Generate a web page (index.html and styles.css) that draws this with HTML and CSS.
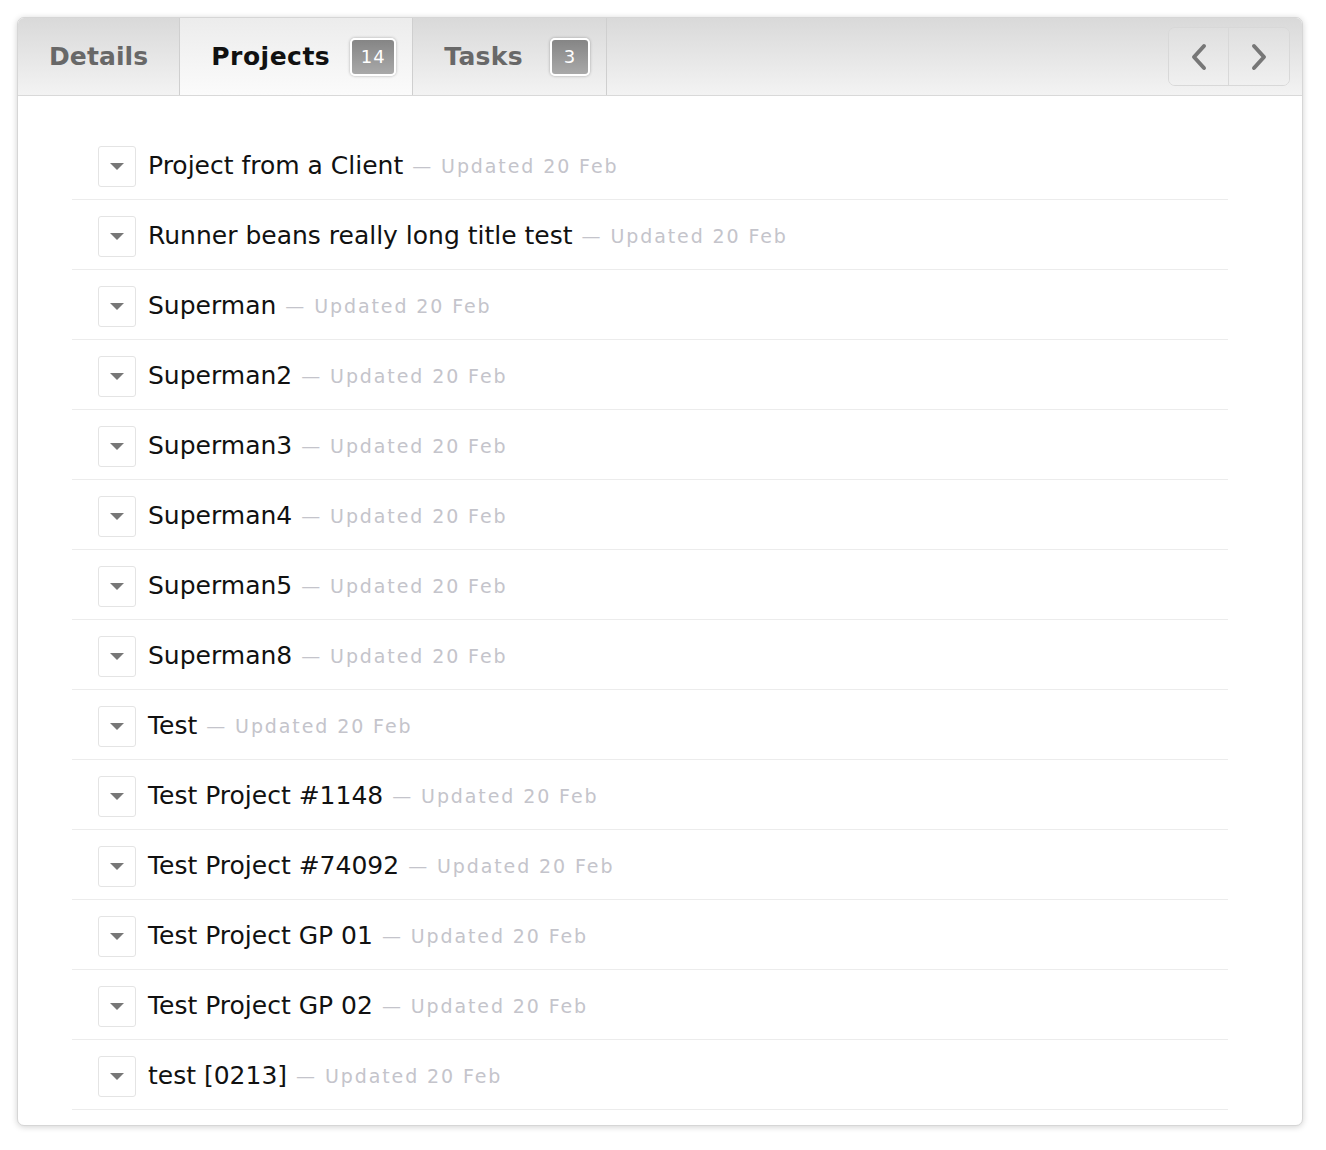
FILE: index.html
```html
<!DOCTYPE html>
<html>
<head>
<meta charset="utf-8">
<link rel="stylesheet" href="styles.css">
</head>
<body>
<div class="page">
  <div class="card">
    <div class="header">
      <div class="tabs">
        <div class="tab tab-details">Details</div>
        <div class="tab tab-active">Projects <span class="badge">14</span></div>
        <div class="tab tab-tasks">Tasks <span class="badge">3</span></div>
      </div>
      <div class="nav">
        <button class="nav-btn nav-prev" aria-label="Previous">
          <svg width="18" height="28" viewBox="0 0 18 28"><path d="M14 3 L4 14 L14 25" fill="none" stroke="#777" stroke-width="4" stroke-linecap="round" stroke-linejoin="round"/></svg>
        </button>
        <button class="nav-btn nav-next" aria-label="Next">
          <svg width="18" height="28" viewBox="0 0 18 28"><path d="M4 3 L14 14 L4 25" fill="none" stroke="#777" stroke-width="4" stroke-linecap="round" stroke-linejoin="round"/></svg>
        </button>
      </div>
    </div>
    <ul class="list">
      <li class="row"><span class="dd"><span class="tri"></span></span><span class="title">Project from a Client</span><span class="meta">— Updated 20 Feb</span></li>
      <li class="row"><span class="dd"><span class="tri"></span></span><span class="title">Runner beans really long title test</span><span class="meta">— Updated 20 Feb</span></li>
      <li class="row"><span class="dd"><span class="tri"></span></span><span class="title">Superman</span><span class="meta">— Updated 20 Feb</span></li>
      <li class="row"><span class="dd"><span class="tri"></span></span><span class="title">Superman2</span><span class="meta">— Updated 20 Feb</span></li>
      <li class="row"><span class="dd"><span class="tri"></span></span><span class="title">Superman3</span><span class="meta">— Updated 20 Feb</span></li>
      <li class="row"><span class="dd"><span class="tri"></span></span><span class="title">Superman4</span><span class="meta">— Updated 20 Feb</span></li>
      <li class="row"><span class="dd"><span class="tri"></span></span><span class="title">Superman5</span><span class="meta">— Updated 20 Feb</span></li>
      <li class="row"><span class="dd"><span class="tri"></span></span><span class="title">Superman8</span><span class="meta">— Updated 20 Feb</span></li>
      <li class="row"><span class="dd"><span class="tri"></span></span><span class="title">Test</span><span class="meta">— Updated 20 Feb</span></li>
      <li class="row"><span class="dd"><span class="tri"></span></span><span class="title">Test Project #1148</span><span class="meta">— Updated 20 Feb</span></li>
      <li class="row"><span class="dd"><span class="tri"></span></span><span class="title">Test Project #74092</span><span class="meta">— Updated 20 Feb</span></li>
      <li class="row"><span class="dd"><span class="tri"></span></span><span class="title">Test Project GP 01</span><span class="meta">— Updated 20 Feb</span></li>
      <li class="row"><span class="dd"><span class="tri"></span></span><span class="title">Test Project GP 02</span><span class="meta">— Updated 20 Feb</span></li>
      <li class="row"><span class="dd"><span class="tri"></span></span><span class="title">test [0213]</span><span class="meta">— Updated 20 Feb</span></li>
    </ul>
  </div>
</div>
</body>
</html>
```
FILE: styles.css
```css
html, body {
  margin: 0;
  padding: 0;
  background: #ffffff;
}
body {
  font-family: "DejaVu Sans", Verdana, sans-serif;
}
.page {
  padding: 17px 23px 25px 17px;
}
.card {
  width: 1284px;
  border: 1px solid #d6d6d6;
  border-radius: 7px;
  background: #fff;
  box-shadow: 0 1px 6px rgba(0,0,0,0.18);
  overflow: hidden;
}
.header {
  height: 77px;
  display: flex;
  justify-content: space-between;
  align-items: center;
  background: linear-gradient(#d9d9d9, #f3f3f3);
  border-bottom: 1px solid #d9d9d9;
}
.tabs {
  display: flex;
  height: 100%;
}
.tab {
  display: flex;
  align-items: center;
  height: 100%;
  box-sizing: border-box;
  padding: 0 31px 0 31px;
  font-weight: bold;
  font-size: 25px;
  color: #686868;
  border-right: 1px solid #cfcfcf;
  letter-spacing: 0.3px;
}
.tab-details {
  letter-spacing: 0.1px;
}
.tab-active {
  color: #111;
  background: linear-gradient(#ececec, #fbfbfb);
  padding-left: 31px;
  padding-right: 16px;
  letter-spacing: 0.5px;
}
.tab-tasks {
  padding-right: 16px;
}
.badge {
  display: inline-flex;
  align-items: center;
  justify-content: center;
  margin-left: 20px;
  width: 46px;
  height: 38px;
  box-sizing: border-box;
  border: 2px solid #fff;
  border-radius: 5px;
  background: linear-gradient(#858585, #a9a9a9);
  color: #fff;
  font-weight: normal;
  font-size: 18px;
  letter-spacing: 1px;
  box-shadow: 0 0 3px rgba(0,0,0,0.3);
}
.tab-tasks .badge {
  width: 40px;
  margin-left: 27px;
}
.nav {
  display: flex;
  margin-right: 12px;
  border: 1px solid #d8d8d8;
  border-radius: 7px;
  overflow: hidden;
}
.nav-btn {
  width: 60px;
  height: 57px;
  display: flex;
  align-items: center;
  justify-content: center;
  border: 0;
  padding: 0;
  background: linear-gradient(#dfdfdf, #f0f0f0);
}
.nav-prev {
  border-right: 1px solid #d8d8d8;
}
.list {
  list-style: none;
  margin: 0 74px 0 54px;
  padding: 34px 0 15px;
}
.row {
  display: flex;
  align-items: center;
  box-sizing: border-box;
  height: 70px;
  padding-top: 3px;
  border-bottom: 1px solid #ececec;
}
.dd {
  display: flex;
  align-items: center;
  justify-content: center;
  width: 36px;
  height: 39px;
  margin-left: 26px;
  margin-right: 12px;
  border: 1px solid #e4e4e4;
  border-radius: 3px;
  background: #fff;
}
.tri {
  width: 0;
  height: 0;
  border-left: 7px solid transparent;
  border-right: 7px solid transparent;
  border-top: 7px solid #777;
}
.title {
  font-size: 25px;
  color: #111;
  padding-bottom: 2px;
}
.meta {
  margin-left: 9px;
  font-size: 19px;
  color: #c4c4cb;
  letter-spacing: 1.9px;
}
```
